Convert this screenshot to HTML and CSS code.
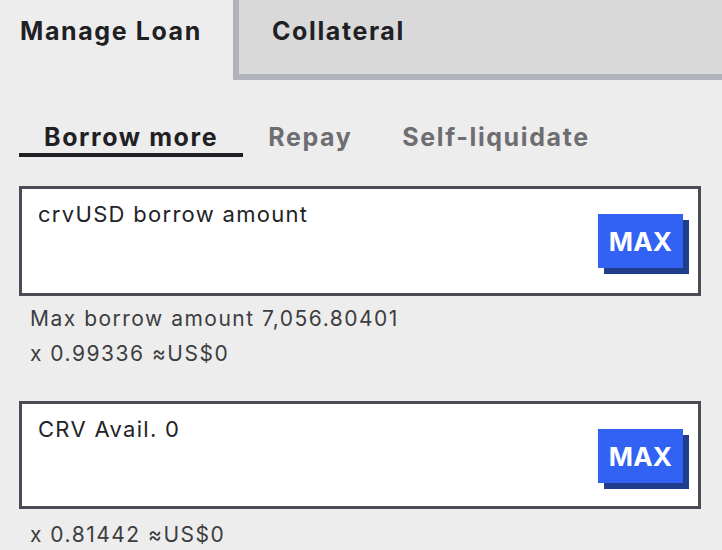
FILE: index.html
```html
<!DOCTYPE html>
<html>
<head>
<meta charset="utf-8">
<link rel="stylesheet" href="styles.css">
</head>
<body>
<div class="page">
  <div class="tabs">
    <div class="tab active">Manage Loan</div>
    <div class="tab inactive">Collateral</div>
  </div>
  <div class="content">
    <div class="subtabs">
      <div class="subtab selected">Borrow more</div>
      <div class="subtab">Repay</div>
      <div class="subtab">Self-liquidate</div>
    </div>
    <div class="field">
      <div class="label">crvUSD borrow amount</div>
      <button class="max">MAX</button>
    </div>
    <div class="help">
      <div class="help-line">Max borrow amount 7,056.80401</div>
      <div class="help-line">x 0.99336 ≈US$0</div>
    </div>
    <div class="field field2">
      <div class="label">CRV Avail. 0</div>
      <button class="max">MAX</button>
    </div>
    <div class="help help2">
      <div class="help-line">x 0.81442 ≈US$0</div>
    </div>
  </div>
</div>
</body>
</html>
```
FILE: styles.css
```css
* { box-sizing: border-box; }
html, body { margin: 0; padding: 0; }
body {
  background: #ededed;
  font-family: Inter, "Noto Sans", sans-serif;
  color: #1f2024;
  width: 722px;
  height: 550px;
  overflow: hidden;
}
.tabs {
  display: flex;
  height: 80px;
}
.tab {
  font-size: 25px;
  font-weight: 700;
  letter-spacing: 1.6px;
  line-height: 30px;
  padding-top: 16px;
}
.tab.active {
  width: 233px;
  padding-left: 20px;
}
.tab.inactive {
  flex: 1;
  background: #d9d9d9;
  border-left: 6px solid #b0b3bb;
  border-bottom: 6px solid #b0b3bb;
  padding-left: 33px;
}
.content {
  padding: 0 21px 0 19px;
}
.subtabs {
  display: flex;
  margin-top: 41px;
  height: 36px;
}
.subtab {
  font-size: 25px;
  font-weight: 700;
  letter-spacing: 1.6px;
  color: #6d6e72;
  padding: 0 25px;
  line-height: 32px;
}
.subtab.selected {
  color: #1f2024;
  border-bottom: 4px solid #1f2024;
}
.field {
  margin-top: 29px;
  height: 110px;
  background: #fff;
  border: 3px solid #4a4d56;
  display: flex;
  align-items: flex-start;
  justify-content: space-between;
  padding: 11px 0 0 16px;
}
.field2 {
  margin-top: 30px;
  height: 108px;
}
.label {
  font-size: 22px;
  line-height: 28px;
  letter-spacing: 1.3px;
  color: #222326;
}
.max {
  margin-top: 14px;
  margin-right: 15px;
  width: 85px;
  height: 54px;
  background: #3162f4;
  border: none;
  color: #fff;
  font-family: Inter, "Noto Sans", sans-serif;
  font-size: 26px;
  font-weight: 700;
  letter-spacing: 0.3px;
  box-shadow: 6px 6px 0 #213e8c;
  padding: 0;
}
.help {
  padding: 5px 0 0 11px;
}
.help2 {
  padding-top: 8px;
}
.help-line {
  font-size: 21px;
  line-height: 35px;
  letter-spacing: 1.5px;
  color: #3c3d41;
}
```
